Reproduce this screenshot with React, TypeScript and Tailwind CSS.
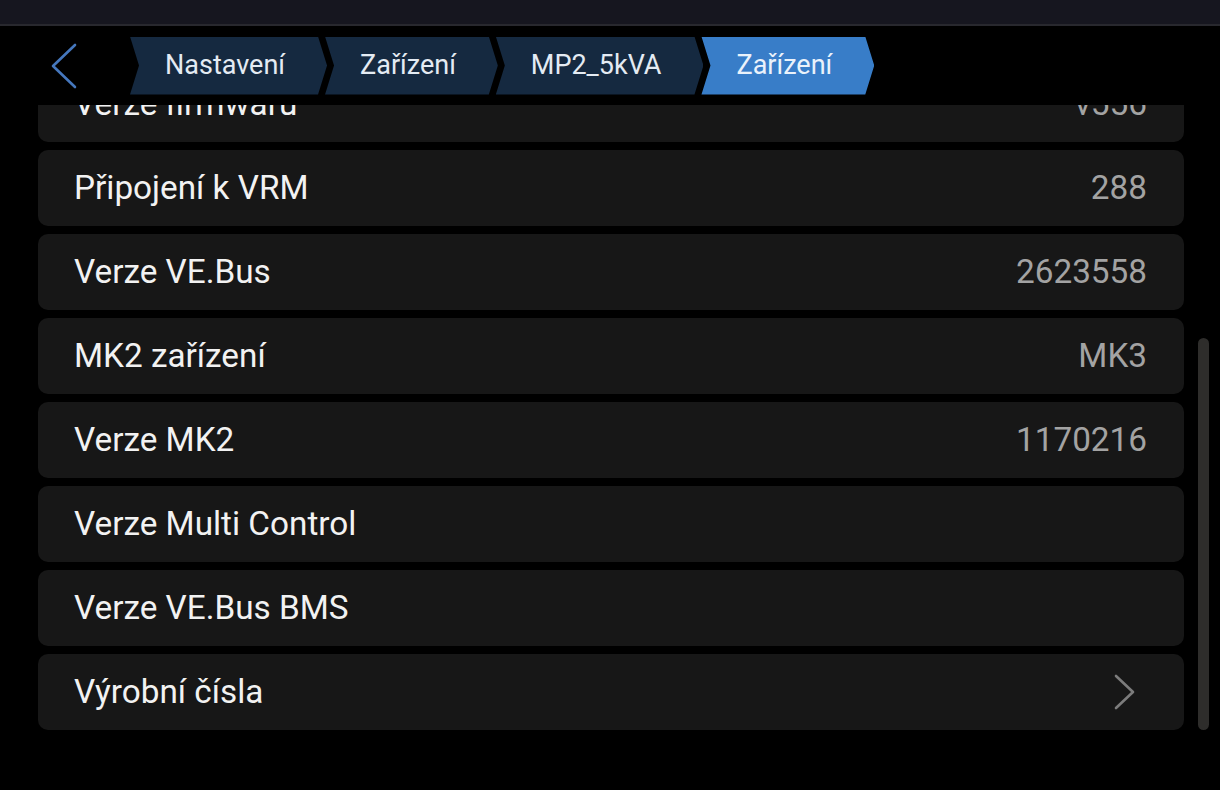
const crumbs = ["Nastavení", "Zařízení", "MP2_5kVA", "Zařízení"];

const rows: { label: string; value?: string; link?: boolean }[] = [
  { label: "Verze firmwaru", value: "v556" },
  { label: "Připojení k VRM", value: "288" },
  { label: "Verze VE.Bus", value: "2623558" },
  { label: "MK2 zařízení", value: "MK3" },
  { label: "Verze MK2", value: "1170216" },
  { label: "Verze Multi Control" },
  { label: "Verze VE.Bus BMS" },
  { label: "Výrobní čísla", link: true },
];

export default function App() {
  return (
    <div className="w-[1220px] h-[790px] bg-black overflow-hidden flex flex-col font-['Roboto',sans-serif]">
      <div className="h-[24px] bg-[#16161f]" />
      <div className="h-[2px] bg-[#28282e]" />

      {/* header: back + breadcrumbs */}
      <div className="h-[79px] flex items-center pl-[50px]">
        <svg width="28" height="46" viewBox="0 0 28 46" fill="none">
          <polyline
            points="25,2 3,23 25,44"
            stroke="#4577bd"
            strokeWidth="2.6"
            strokeLinecap="round"
            strokeLinejoin="round"
          />
        </svg>
        <div className="flex ml-[52px]">
          {crumbs.map((c, i) => (
            <div
              key={i}
              className={`h-[58px] flex items-center pl-[35px] pr-[42px] text-[27px] [clip-path:polygon(0_0,calc(100%_-_9px)_0,100%_50%,calc(100%_-_9px)_100%,0_100%,9px_50%)] ${
                i === 0 ? "" : "-ml-[2px]"
              } ${
                i === crumbs.length - 1
                  ? "bg-[#387dc8] text-[#eaf2fb]"
                  : "bg-[#152940] text-[#e4ebf3]"
              }`}
            >
              {c}
            </div>
          ))}
        </div>
      </div>

      {/* list */}
      <div className="flex-1 flex overflow-hidden">
        <div className="w-[1146px] ml-[38px] flex flex-col gap-[8px] -mt-[39px]">
          {rows.map((r) => (
            <div
              key={r.label}
              className="h-[76px] shrink-0 rounded-[10px] bg-[#171717] flex items-center justify-between pl-[36px] pr-[37px] text-[33.3px]"
            >
              <span className="text-[#f2f2f2]">{r.label}</span>
              {r.value && <span className="text-[#a3a3a3]">{r.value}</span>}
              {r.link && (
                <svg width="24" height="38" viewBox="0 0 24 38" fill="none" className="mr-[10px]">
                  <polyline
                    points="3,3 20,19 3,35"
                    stroke="#7c7c7c"
                    strokeWidth="2.6"
                    strokeLinecap="round"
                    strokeLinejoin="round"
                  />
                </svg>
              )}
            </div>
          ))}
        </div>
        <div className="w-[11px] h-[392px] mt-[233px] ml-[14px] rounded-full bg-[#2e2d2b]" />
      </div>
    </div>
  );
}
